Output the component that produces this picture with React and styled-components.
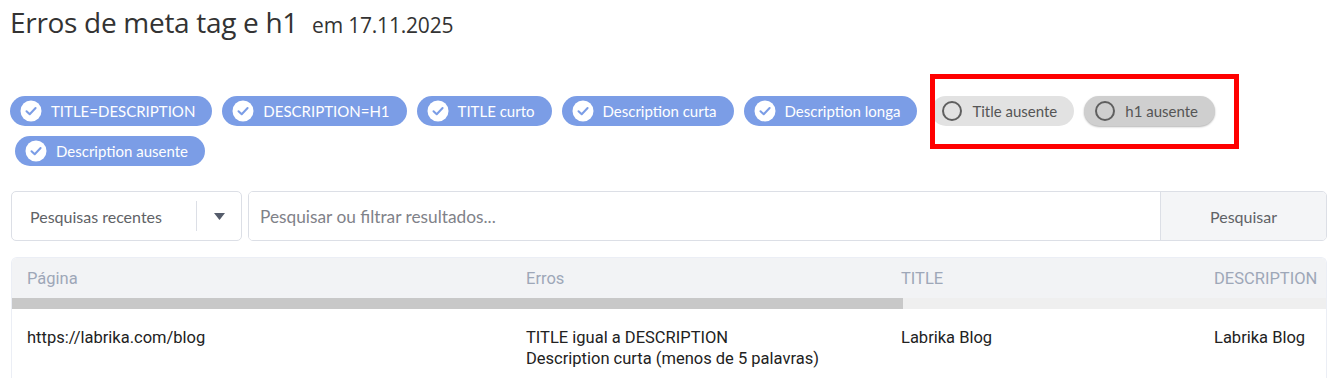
import React from "react";
import styled, { createGlobalStyle } from "styled-components";

const Global = createGlobalStyle`
  html, body { margin: 0; padding: 0; background: #fff; }
  body { font-family: "Open Sans", sans-serif; color: #333; }
`;

const Page = styled.div`
  width: 1338px;
  height: 378px;
  overflow: hidden;
  position: relative;
  padding: 0 11px 0 10px;
  box-sizing: border-box;
`;

const Heading = styled.h1`
  margin: 0;
  padding-top: 4px;
  font-family: "Open Sans", sans-serif;
  font-weight: 400;
  font-size: 28px;
  line-height: 36px;
  height: 36px;
  color: #333;
  letter-spacing: -0.3px;
`;

const DateText = styled.span`
  font-size: 21px;
  margin-left: 14px;
  letter-spacing: -0.2px;
`;

const Chips = styled.div`
  display: flex;
  flex-wrap: wrap;
  gap: 10px 10px;
  margin-top: 56px;
  width: 1230px;
`;

const Chip = styled.button`
  display: inline-flex;
  align-items: center;
  height: 30px;
  padding: 0 17px 0 10px;
  border: none;
  border-radius: 15px;
  font-family: "Lato", sans-serif;
  font-size: 15px;
  cursor: pointer;
  background: ${(p) => (p.$active ? "#7b9de6" : p.$hover ? "#cfcfcf" : "#e2e2e2")};
  color: ${(p) => (p.$active ? "#fff" : "#555")};
  box-shadow: ${(p) => (p.$hover ? "0 1px 2px rgba(0,0,0,0.3)" : "none")};
  margin-left: ${(p) => p.$ml || 0}px;
`;

const IconBox = styled.span`
  display: inline-flex;
  width: 22px;
  height: 22px;
  margin-right: 9px;
`;

const CheckIcon = () => (
  <IconBox>
    <svg width="22" height="22" viewBox="0 0 22 22">
      <circle cx="11" cy="11" r="10.5" fill="#fff" />
      <path d="M6.5 11.2 L9.7 14.3 L15.6 8" fill="none" stroke="#7b9de6" strokeWidth="2" strokeLinecap="round" strokeLinejoin="round" />
    </svg>
  </IconBox>
);

const EmptyIcon = () => (
  <IconBox>
    <svg width="22" height="22" viewBox="0 0 22 22">
      <circle cx="11" cy="11" r="9" fill="none" stroke="#5f5f5f" strokeWidth="2" />
    </svg>
  </IconBox>
);

const Highlight = styled.div`
  position: absolute;
  left: 930px;
  top: 74px;
  width: 309px;
  height: 75px;
  border: 5px solid #ff0000;
  box-sizing: border-box;
  pointer-events: none;
`;

const SearchRow = styled.div`
  display: flex;
  gap: 6px;
  margin-top: 25px;
  margin-left: 1px;
  height: 50px;
`;

const Select = styled.div`
  width: 231px;
  box-sizing: border-box;
  border: 1px solid #dcdfe6;
  border-radius: 5px;
  display: flex;
  align-items: center;
  font-family: "Lato", sans-serif;
  font-size: 16px;
  color: #606266;
`;

const SelectLabel = styled.span`
  flex: 1;
  padding-left: 18px;
`;

const SelectDivider = styled.span`
  width: 1px;
  height: 30px;
  background: #dcdfe6;
`;

const Caret = styled.span`
  width: 44px;
  display: flex;
  justify-content: center;
  svg { display: block; }
`;

const SearchBox = styled.div`
  flex: 1;
  display: flex;
  border: 1px solid #dcdfe6;
  border-radius: 5px;
  overflow: hidden;
`;

const SearchInput = styled.input`
  flex: 1;
  border: none;
  outline: none;
  padding: 0 11px;
  font-family: "Lato", sans-serif;
  font-size: 17.3px;
  color: #606266;
  &::placeholder { color: #7f8289; }
`;

const SearchButton = styled.button`
  width: 166px;
  border: none;
  border-left: 1px solid #dcdfe6;
  background: #f4f5f7;
  font-family: "Lato", sans-serif;
  font-size: 16px;
  color: #606266;
`;

const TableWrap = styled.div`
  margin-top: 16px;
  margin-left: 1px;
  border: 1px solid #ebeef5;
  border-bottom: none;
  border-radius: 6px 6px 0 0;
  overflow: hidden;
`;

const cols = "499px 375px 313px 313px 441px";
const TOTAL = 1941;

const HeadRow = styled.div`
  display: grid;
  grid-template-columns: ${cols};
  height: 40px;
  align-items: center;
  background: #f2f3f5;
  width: ${TOTAL}px;
`;

const HeadCell = styled.div`
  padding-left: 15px;
  font-family: "Roboto", sans-serif;
  font-size: 16.5px;
  color: #9ea7b8;
  white-space: nowrap;
`;

const ScrollTrack = styled.div`
  height: 11px;
  background: #efefef;
`;

const ScrollThumb = styled.div`
  height: 100%;
  background: #c8c8c8;
`;

const BodyRow = styled.div`
  display: grid;
  grid-template-columns: ${cols};
  width: ${TOTAL}px;
  padding: 18px 0 14px;
`;

const Cell = styled.div`
  padding-left: 15px;
  font-family: "Roboto", sans-serif;
  font-size: 16.5px;
  line-height: 21px;
  color: #222;
  white-space: nowrap;
`;

const active = [
  "TITLE=DESCRIPTION",
  "DESCRIPTION=H1",
  "TITLE curto",
  "Description curta",
  "Description longa",
];

export default function App() {
  const visible = 1316;
  return (
    <>
      <Global />
      <Page>
        <Heading>
          Erros de meta tag e h1<DateText>em 17.11.2025</DateText>
        </Heading>
        <Chips>
          {active.map((t) => (
            <Chip key={t} $active>
              <CheckIcon />
              {t}
            </Chip>
          ))}
          <Chip $ml={4}>
            <EmptyIcon />
            Title ausente
          </Chip>
          <Chip $hover>
            <EmptyIcon />
            h1 ausente
          </Chip>
          <Chip $active $ml={5}>
            <CheckIcon />
            Description ausente
          </Chip>
        </Chips>
        <Highlight />
        <SearchRow>
          <Select>
            <SelectLabel>Pesquisas recentes</SelectLabel>
            <SelectDivider />
            <Caret>
              <svg width="11" height="7" viewBox="0 0 11 7">
                <path d="M0 0 L11 0 L5.5 7 Z" fill="#555c6b" />
              </svg>
            </Caret>
          </Select>
          <SearchBox>
            <SearchInput placeholder="Pesquisar ou filtrar resultados..." />
            <SearchButton>Pesquisar</SearchButton>
          </SearchBox>
        </SearchRow>
        <TableWrap>
          <HeadRow>
            <HeadCell>Página</HeadCell>
            <HeadCell>Erros</HeadCell>
            <HeadCell>TITLE</HeadCell>
            <HeadCell>DESCRIPTION</HeadCell>
            <HeadCell />
          </HeadRow>
          <ScrollTrack>
            <ScrollThumb style={{ width: `${((visible / TOTAL) * 100).toFixed(2)}%` }} />
          </ScrollTrack>
          <BodyRow>
            <Cell>https://labrika.com/blog</Cell>
            <Cell>
              TITLE igual a DESCRIPTION
              <br />
              Description curta (menos de 5 palavras)
            </Cell>
            <Cell>Labrika Blog</Cell>
            <Cell>Labrika Blog</Cell>
            <Cell />
          </BodyRow>
        </TableWrap>
      </Page>
    </>
  );
}
